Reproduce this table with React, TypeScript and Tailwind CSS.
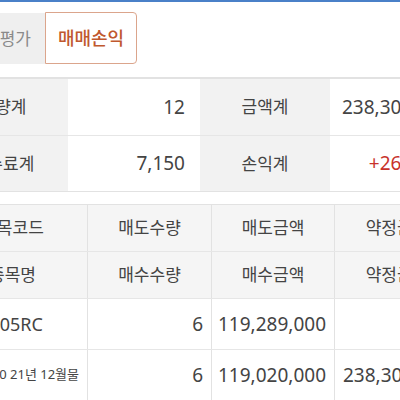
const font = { fontFamily: '"Noto Sans", "Noto Sans CJK KR", sans-serif' };

const summary = [
    { l1: '수량계', v1: '12', l2: '금액계', v2: '238,309,000', red: false },
    { l1: '수수료계', v1: '7,150', l2: '손익계', v2: '+269,000', red: true },
];

const rows = [
    { name: 'A016505RC', qty: '6', amt: '119,289,000', sum: '', small: false },
    { name: 'KOSPI200 21년 12월물', qty: '6', amt: '119,020,000', sum: '238,309,000', small: true },
];

export default function App() {
    return (
        <div className="w-[400px] h-[400px] overflow-hidden bg-white text-[#444]" style={font}>
            <div className="h-[2px] bg-[#4a80c8]" />

            {/* Tabs */}
            <div className="h-[75px] pt-[11px] flex">
                <div className="-ml-[45px] w-[90px] h-[51px] bg-[#efefef] flex items-center justify-end pr-[14px] text-[17px] text-[#8a8a8a] whitespace-nowrap overflow-hidden">
                    잔고 평가
                </div>
                <div className="w-[92px] h-[52px] -mt-[1px] border border-[#dba58c] rounded-r-[4px] flex items-center justify-center text-[18px] font-medium text-[#c0582e]">
                    매매손익
                </div>
            </div>

            <div className="-ml-[62px] w-[600px]">
                {/* Summary table */}
                <div className="border-t-2 border-b border-[#e2e2e2]">
                    {summary.map((r, i) => (
                        <div key={i} className={`flex h-[56px] ${i > 0 ? 'border-t border-[#e6e6e6]' : ''}`}>
                            <div className="w-[130px] bg-[#f2f2f2] flex items-center justify-center text-[17px]">{r.l1}</div>
                            <div className="w-[132px] flex items-center justify-end pr-[15px] text-[19px]">{r.v1}</div>
                            <div className="w-[130px] bg-[#f2f2f2] flex items-center justify-center text-[17px]">{r.l2}</div>
                            <div className={`w-[132px] flex items-center justify-end pr-[12px] text-[19px] ${r.red ? 'text-[#c8322b]' : ''}`}>{r.v2}</div>
                        </div>
                    ))}
                </div>

                {/* Trade list */}
                <div className="mt-[12px] border-t border-[#e2e2e2]">
                    <div className="flex h-[47px] bg-[#f5f5f5] border-b border-[#e6e6e6] text-[17px]">
                        <div className="w-[150px] flex items-center justify-center border-r border-[#e2e2e2]">종목코드</div>
                        <div className="w-[124px] flex items-center justify-center border-r border-[#e2e2e2]">매도수량</div>
                        <div className="w-[123px] flex items-center justify-center border-r border-[#e2e2e2]">매도금액</div>
                        <div className="w-[124px] flex items-center justify-center">약정금액</div>
                    </div>
                    <div className="flex h-[47px] bg-[#f5f5f5] border-b border-[#e6e6e6] text-[17px]">
                        <div className="w-[150px] flex items-center justify-center border-r border-[#e2e2e2]">종목명</div>
                        <div className="w-[124px] flex items-center justify-center border-r border-[#e2e2e2]">매수수량</div>
                        <div className="w-[123px] flex items-center justify-center border-r border-[#e2e2e2]">매수금액</div>
                        <div className="w-[124px] flex items-center justify-center">약정금액</div>
                    </div>
                    {rows.map((r, i) => (
                        <div key={i} className="flex h-[51px] border-b border-[#e6e6e6] text-[19px]">
                            <div className={`w-[150px] flex items-center pl-[9px] border-r border-[#e2e2e2] whitespace-nowrap overflow-hidden ${r.small ? 'text-[13px]' : 'text-[18px]'}`}>{r.name}</div>
                            <div className="w-[124px] flex items-center justify-end pr-[8px] border-r border-[#e2e2e2]">{r.qty}</div>
                            <div className="w-[123px] flex items-center justify-end pr-[8px] border-r border-[#e2e2e2]">{r.amt}</div>
                            <div className="w-[124px] flex items-center justify-end pr-[8px]">{r.sum}</div>
                        </div>
                    ))}
                </div>
            </div>
        </div>
    );
}
